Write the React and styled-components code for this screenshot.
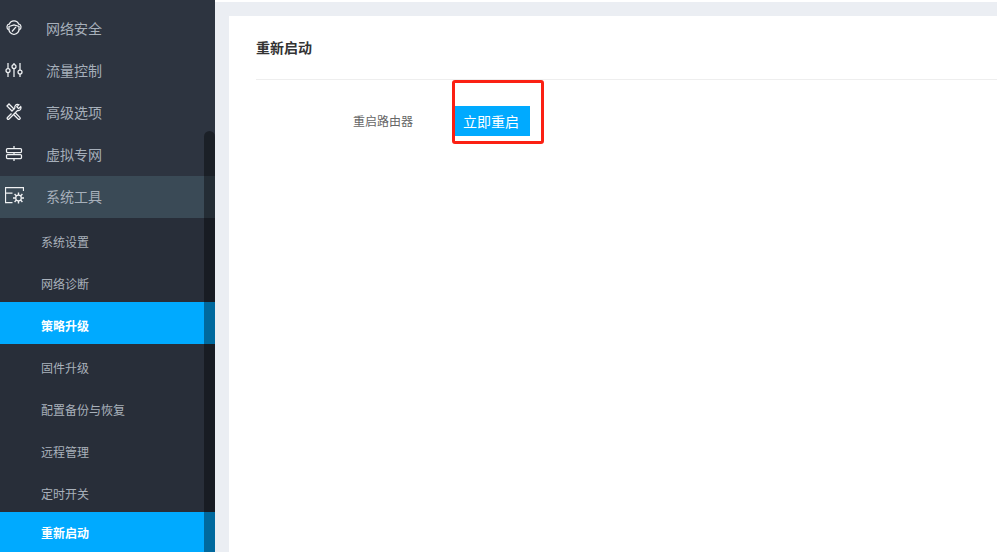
import React from "react";
import styled, { createGlobalStyle } from "styled-components";

const GlobalStyle = createGlobalStyle`
  html, body {
    margin: 0;
    height: 100%;
    overflow: hidden;
    background: #fff;
  }
  body {
    font-family: "Noto Sans CJK SC", "Liberation Sans", sans-serif;
  }
`;

const Layout = styled.div`
  display: flex;
  height: 552px;
  overflow: hidden;
`;

const Sidebar = styled.aside`
  position: relative;
  flex: 0 0 215px;
  padding-top: 8px;
  background: #2d3440;
  overflow: hidden;
`;

const MenuRow = styled.div`
  display: flex;
  align-items: center;
  box-sizing: border-box;
  height: 42px;
  padding-bottom: 2px;
  color: #a6afba;
  font-size: 14px;
  background: ${(p) => (p.$open ? "#3a4a56" : "transparent")};
`;

const MenuIcon = styled.span`
  display: flex;
  justify-content: center;
  flex: 0 0 28px;
  margin-right: 18px;
  color: #f0f2f4;
  svg {
    display: block;
  }
`;

const SubMenu = styled.div`
  background: #282e39;
`;

const SubRow = styled.div`
  display: flex;
  align-items: center;
  box-sizing: border-box;
  height: 42px;
  padding: 4px 0 0 41px;
  font-size: 12px;
  font-weight: ${(p) => (p.$active ? 700 : 400)};
  color: ${(p) => (p.$active ? "#fff" : "#a9b1bb")};
  background: ${(p) => (p.$active ? "#00aaff" : "transparent")};

  &:last-child {
    padding-top: 0;
    padding-bottom: 1px;
  }
`;

const ScrollThumb = styled.div`
  position: absolute;
  top: 131px;
  right: 0;
  bottom: -10px;
  width: 11px;
  border-radius: 6px 6px 0 0;
  background: rgba(0, 0, 0, 0.38);
`;

const Main = styled.main`
  flex: 1;
  min-width: 0;
  margin-top: 2px;
  padding: 14px 0 0 14px;
  background: #ebeef3;
`;

const Card = styled.section`
  height: 100%;
  padding-left: 27px;
  background: #fff;
`;

const CardTitle = styled.h2`
  display: flex;
  align-items: center;
  box-sizing: content-box;
  height: 61px;
  margin: 0;
  padding-bottom: 2px;
  border-bottom: 1px solid #eeeeee;
  font-size: 14px;
  font-weight: 700;
  color: #333;
`;

const FormRow = styled.div`
  display: flex;
  align-items: center;
  margin-top: 26px;
`;

const FieldLabel = styled.label`
  width: 157px;
  margin-right: 42px;
  margin-top: -1px;
  text-align: right;
  font-size: 12px;
  color: #666;
`;

const ButtonWrap = styled.div`
  position: relative;
`;

const RebootButton = styled.button`
  display: block;
  width: 75px;
  height: 30px;
  padding: 0 0 0 8px;
  border: 0;
  background: #00aaff;
  color: #fff;
  font: inherit;
  font-size: 14px;
  text-align: left;
`;

const Annotation = styled.div`
  position: absolute;
  left: -3px;
  top: -26px;
  width: 92px;
  height: 64px;
  box-sizing: border-box;
  border: 3px solid #fb2013;
  border-radius: 3px;
  pointer-events: none;
`;

const Stroke = ({ children, w = 24, h = 24 }) => (
  <svg width={w} height={h} viewBox={`0 0 ${w} ${h}`} fill="none" stroke="currentColor" strokeWidth="1.25">
    {children}
  </svg>
);

const ShieldIcon = () => (
  <Stroke w={16} h={16}>
    <path d="M3.200 4.500C4 2 6 .8 8 .8S12 2 12.800 4.500" />
    <path d="M3.200 4C.4 4.500.2 8.800 2.800 10M12.800 4C15.600 4.500 15.800 8.800 13.200 10" />
    <path d="M3 6.500 8 4.800 13 6.500V9.500C13 12 10.500 13.800 8 14.500 5.500 13.800 3 12 3 9.500Z" />
    <path d="M6 11.500 10 6.800" />
  </Stroke>
);

const SlidersIcon = () => (
  <Stroke w={18} h={16}>
    <path d="M3 1V6.500M3 10.500V15M9 1V2.500M9 6.500V15M15 1V8M15 12V15" />
    <circle cx="3" cy="8.500" r="2" />
    <circle cx="9" cy="4.500" r="2" />
    <circle cx="15" cy="10" r="2" />
  </Stroke>
);

const ToolsIcon = () => (
  <Stroke w={16} h={18}>
    <path d="M1 3 3 1 8 6 6 8Z" />
    <path d="M9 9.500 13.800 14.300C14.400 15 14.400 15.500 13.800 16 13.200 16.600 12.700 16.600 12.100 16L7.300 11.200" />
    <path d="M5.500 10.500 1.500 14.500C1 15.100 1 15.600 1.500 16 2 16.500 2.500 16.500 3 16L11.500 7.500C13.200 8.100 15 6.800 15 4.800 15 4.300 14.900 3.900 14.700 3.500L12.600 5.600 10.800 3.800 12.900 1.700C12.500 1.500 12.100 1.400 11.600 1.400 9.600 1.400 8.300 3.200 8.900 4.900L7.500 6.300" />
  </Stroke>
);

const RouteIcon = () => (
  <Stroke w={18} h={16}>
    <path d="M9 0V2.500M9 6.500V8.500M9 12.500V15" />
    <rect x="1.500" y="2.500" width="15" height="4" rx="1" />
    <rect x="1.500" y="8.500" width="15" height="4" rx="1" />
  </Stroke>
);

const SystemIcon = () => (
  <Stroke w={19} h={18}>
    <path d="M18.500 4V.5H.5V6H7.500M.5 6V15.500H7.500" />
    <circle cx="13.500" cy="11" r="2.800" />
    <path
      d="M13.500 5.500V8M13.500 14V16.500M8 11H10.500M16.500 11H19M9.600 7.100 11.400 8.900M15.600 13.100 17.400 14.900M17.400 7.100 15.600 8.900M11.400 13.100 9.600 14.900"
      strokeWidth="1.400"
    />
  </Stroke>
);

const menu = [
  { label: "网络安全", icon: <ShieldIcon /> },
  { label: "流量控制", icon: <SlidersIcon /> },
  { label: "高级选项", icon: <ToolsIcon /> },
  { label: "虚拟专网", icon: <RouteIcon /> },
  { label: "系统工具", icon: <SystemIcon />, open: true },
];

const subMenu = [
  { label: "系统设置" },
  { label: "网络诊断" },
  { label: "策略升级", active: true },
  { label: "固件升级" },
  { label: "配置备份与恢复" },
  { label: "远程管理" },
  { label: "定时开关" },
  { label: "重新启动", active: true },
];

export default function App() {
  return (
    <>
      <GlobalStyle />
      <Layout>
        <Sidebar>
          {menu.map((item) => (
            <MenuRow key={item.label} $open={item.open}>
              <MenuIcon>{item.icon}</MenuIcon>
              {item.label}
            </MenuRow>
          ))}
          <SubMenu>
            {subMenu.map((item) => (
              <SubRow key={item.label} $active={item.active}>
                {item.label}
              </SubRow>
            ))}
          </SubMenu>
          <ScrollThumb />
        </Sidebar>
        <Main>
          <Card>
            <CardTitle>重新启动</CardTitle>
            <FormRow>
              <FieldLabel>重启路由器</FieldLabel>
              <ButtonWrap>
                <RebootButton>立即重启</RebootButton>
                <Annotation />
              </ButtonWrap>
            </FormRow>
          </Card>
        </Main>
      </Layout>
    </>
  );
}
